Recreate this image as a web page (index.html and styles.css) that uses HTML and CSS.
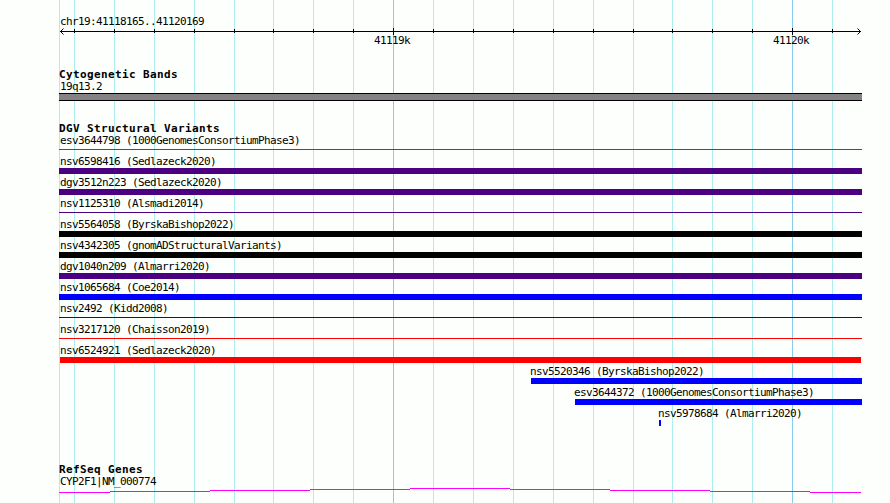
FILE: index.html
```
<!DOCTYPE html>
<html>
<head>
  <meta charset="utf-8">
  <title>chr19:41118165..41120169</title>
  <link rel="stylesheet" href="styles.css">
</head>
<body>
  <div class="browser">
    <svg class="grid" width="890" height="503" shape-rendering="crispEdges">
      <path class="minor" d="M59.5 0V503M74.5 0V503M114.5 0V503M154.5 0V503M194.5 0V503M234.5 0V503M273.5 0V503M313.5 0V503M353.5 0V503M433.5 0V503M473.5 0V503M513.5 0V503M553.5 0V503M593.5 0V503M633.5 0V503M672.5 0V503M712.5 0V503M752.5 0V503M832.5 0V503" />
      <path class="major" d="M393.5 0V503M792.5 0V503" />
    </svg>

    <div class="tracks">
      <div class="scale">
        <div class="label">chr19:41118165..41120169</div>
        <svg class="axis" width="803" height="20">
          <path shape-rendering="crispEdges" d="M1 3.5H802M15.5 1V5M55.5 1V5M95.5 1V5M135.5 1V5M175.5 1V5M214.5 1V5M254.5 1V5M294.5 1V5M334.5 0V7M374.5 1V5M414.5 1V5M454.5 1V5M494.5 1V5M534.5 1V5M574.5 1V5M613.5 1V5M653.5 1V5M693.5 1V5M733.5 0V7M773.5 1V5" />
          <path d="M4.5 0.5L1.5 3.5L4.5 6.5M798.5 0.5L801.5 3.5L798.5 6.5" />
          <text x="315" y="16">41119k</text>
          <text x="714" y="16">41120k</text>
        </svg>
      </div>

      <div class="section bands">
        <div class="title">Cytogenetic Bands</div>
        <div class="label">19q13.2</div>
        <div class="band"></div>
      </div>

      <div class="section variants">
        <div class="title">DGV Structural Variants</div>
        <div class="row"><div class="label">esv3644798 (1000GenomesConsortiumPhase3)</div><div class="bar thin loss-dark"></div></div>
        <div class="row"><div class="label">nsv6598416 (Sedlazeck2020)</div><div class="bar inversion"></div></div>
        <div class="row"><div class="label">dgv3512n223 (Sedlazeck2020)</div><div class="bar inversion"></div></div>
        <div class="row"><div class="label">nsv1125310 (Alsmadi2014)</div><div class="bar thin inversion"></div></div>
        <div class="row"><div class="label">nsv5564058 (ByrskaBishop2022)</div><div class="bar unknown"></div></div>
        <div class="row"><div class="label">nsv4342305 (gnomADStructuralVariants)</div><div class="bar unknown"></div></div>
        <div class="row"><div class="label">dgv1040n209 (Almarri2020)</div><div class="bar inversion"></div></div>
        <div class="row"><div class="label">nsv1065684 (Coe2014)</div><div class="bar gain"></div></div>
        <div class="row"><div class="label">nsv2492 (Kidd2008)</div><div class="bar thin gain"></div></div>
        <div class="row"><div class="label">nsv3217120 (Chaisson2019)</div><div class="bar thin loss"></div></div>
        <div class="row"><div class="label">nsv6524921 (Sedlazeck2020)</div><div class="bar loss inset"></div></div>
        <div class="row" style="margin-left: 472px"><div class="label outer">nsv5520346 (ByrskaBishop2022)</div><div class="bar gain"></div></div>
        <div class="row" style="margin-left: 516px"><div class="label outer">esv3644372 (1000GenomesConsortiumPhase3)</div><div class="bar gain"></div></div>
        <div class="row" style="margin-left: 600px"><div class="label outer">nsv5978684 (Almarri2020)</div><div class="bar gain" style="width: 2px"></div></div>
      </div>

      <div class="section genes">
        <div class="title">RefSeq Genes</div>
        <div class="label">CYP2F1|NM_000774</div>
        <svg class="gene" width="803" height="5" shape-rendering="crispEdges">
          <path d="M0 4.5H51M51 3.5H151M151 2.5H251M251 1.5H351M351 0.5H451M451 1.5H551M551 2.5H651M651 3.5H751M751 4.5H802" />
        </svg>
      </div>
    </div>
  </div>
</body>
</html>
```
FILE: styles.css
```
body { margin: 0; background: #fdfffc; color: #000; font: 11px/13px "DejaVu Sans Mono", monospace; overflow: hidden; }
svg { display: block; }
.browser { position: relative; width: 890px; height: 503px; overflow: hidden; }
.grid { position: absolute; top: 0; left: 0; }
.grid path { fill: none; stroke-width: 1; }
.grid .minor { stroke: #afeeee; }
.grid .major { stroke: #87ceeb; }
.tracks { position: relative; width: 803px; padding: 15px 0 0 59px; }
.label { height: 13px; padding-left: 1px; letter-spacing: -0.622px; white-space: nowrap; }
.label.outer { padding-left: 0; margin-left: -1px; }
.title { height: 12px; font-weight: bold; letter-spacing: 0.378px; white-space: nowrap; }
.axis path { fill: none; stroke: #000; }
.axis text { letter-spacing: -0.622px; }
.bands { margin-top: 20px; }
.band { box-sizing: border-box; height: 8px; background: #848284; border-top: 1px solid #000; border-bottom: 1px solid #000; }
.variants { margin-top: 21px; }
.row { height: 21px; }
.bar { height: 6px; }
.bar.thin { position: relative; top: 2px; height: 1px; }
.bar.inset { margin: 0 1px; }
.loss { background: #f00; }
.loss-dark { background: #e31010; }
.gain { background: #00f; }
.inversion { background: #4b0082; }
.unknown { background: #000; }
.genes { margin-top: 35px; }
.gene path { fill: none; stroke: #f0f; }
```
